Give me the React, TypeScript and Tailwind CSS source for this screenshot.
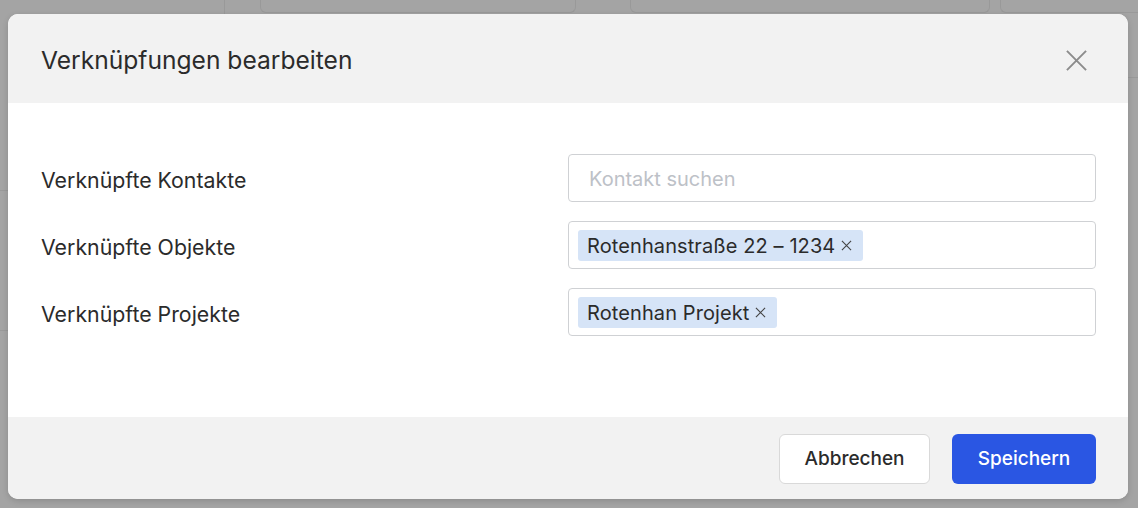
const rows = [
  { label: 'Verknüpfte Kontakte', chips: [] as string[], placeholder: 'Kontakt suchen' },
  { label: 'Verknüpfte Objekte', chips: ['Rotenhanstraße 22 – 1234'] },
  { label: 'Verknüpfte Projekte', chips: ['Rotenhan Projekt'] },
]

function Cross({ className, stroke }: { className: string; stroke: number }) {
  return (
    <svg viewBox="0 0 24 24" className={className} fill="none" stroke="currentColor" strokeWidth={stroke}>
      <path d="M2 2 22 22M22 2 2 22" />
    </svg>
  )
}

export default function App() {
  return (
    <div className="relative h-[508px] w-[1138px] overflow-hidden bg-[#a4a4a4] font-['Inter',sans-serif] text-[#2b2b2b]">
      {/* dimmed page behind the dialog */}
      <div className="absolute left-[224px] top-0 h-[14px] w-px bg-[#999]" />
      <div className="absolute left-[260px] top-0 h-[13px] w-[316px] rounded-b-md border border-t-0 border-[#999]" />
      <div className="absolute left-[630px] top-0 h-[13px] w-[360px] rounded-b-md border border-t-0 border-[#999]" />
      <div className="absolute left-[1000px] top-0 h-[13px] w-[138px] rounded-bl-md border border-t-0 border-r-0 border-[#999]" />
      <div className="absolute left-0 top-[330px] h-px w-[8px] bg-[#999]" />
      <div className="absolute left-0 top-[190px] h-px w-[8px] bg-[#999]" />
      <div className="absolute left-[1128px] top-[77px] h-px w-[10px] bg-[#999]" />

      <div className="absolute left-[8px] top-[14px] flex h-[485px] w-[1120px] flex-col overflow-hidden rounded-[10px] bg-white shadow-[0_2px_6px_rgba(0,0,0,0.15)]">
        <div className="flex h-[89px] shrink-0 items-center justify-between bg-[#f2f2f2] pl-[33px] pr-[40px] pt-[4px]">
          <h2 className="text-[24.6px] font-normal">Verknüpfungen bearbeiten</h2>
          <Cross className="h-[23px] w-[23px] text-[#8c8c8c]" stroke={2} />
        </div>

        <div className="flex flex-1 flex-col gap-[19px] pl-[33px] pr-[32px] pt-[51px]">
          {rows.map((row) => (
            <div key={row.label} className="flex items-center">
              <div className="w-[527px] pt-[5px] text-[21.3px]">{row.label}</div>
              <div className="flex h-[48px] flex-1 items-center rounded-[4px] border border-[#cfd1d4] px-[9px] pt-px">
                {row.chips.length === 0 ? (
                  <span className="pl-[11px] text-[20px] text-[#bdc1c7]">{row.placeholder}</span>
                ) : (
                  row.chips.map((chip) => (
                    <span
                      key={chip}
                      className="flex h-[31px] items-center gap-[6px] rounded-[3px] bg-[#d6e4f7] pl-[9px] pr-[11px] text-[20px] tracking-[0.1px]"
                    >
                      {chip}
                      <Cross className="h-[11px] w-[11px] text-[#444]" stroke={2.4} />
                    </span>
                  ))
                )}
              </div>
            </div>
          ))}
        </div>

        <div className="flex h-[82px] shrink-0 items-center justify-end gap-[22px] bg-[#f2f2f2] pr-[32px] pt-[2px]">
          <button className="h-[50px] w-[151px] rounded-[6px] border border-[#d9d9d9] bg-white text-[19px] font-medium">
            Abbrechen
          </button>
          <button className="h-[50px] w-[144px] rounded-[6px] bg-[#2a56e3] text-[19px] font-medium text-white">
            Speichern
          </button>
        </div>
      </div>
    </div>
  )
}
